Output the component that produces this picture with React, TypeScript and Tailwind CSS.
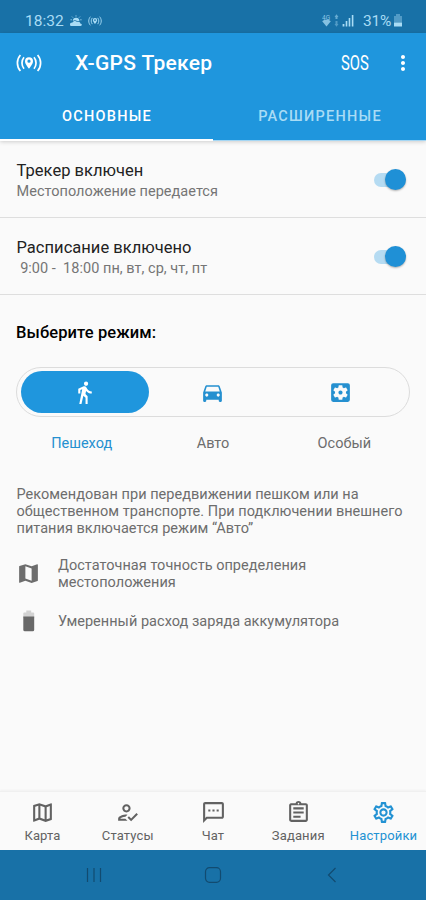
import type { ReactNode } from "react";
import {
  MdDirectionsCar,
  MdDirectionsWalk,
  MdMap,
  MdMoreVert,
  MdOutlineAssignment,
  MdOutlineHowToReg,
  MdOutlineMap,
  MdOutlineSettings,
  MdOutlineSms,
  MdSettingsApplications,
} from "react-icons/md";

function TrackerLogo({ className }: { className: string }) {
  return (
    <svg viewBox="0 0 26 18" className={className} fill="none" stroke="currentColor" strokeWidth="1.7">
      <path d="M4.4 1C.4 5.5.4 12.5 4.4 17M8 3.2c-2.7 3.3-2.7 8.3 0 11.6M21.6 1c4 4.5 4 11.5 0 16M18 3.2c2.7 3.3 2.7 8.3 0 11.6" />
      <path
        d="M13 3.2a4 4 0 0 0-4 4c0 2.9 4 7.4 4 7.4s4-4.5 4-7.4a4 4 0 0 0-4-4Zm0 5.6a1.6 1.6 0 1 1 0-3.2 1.6 1.6 0 0 1 0 3.2Z"
        fill="currentColor"
        stroke="none"
      />
    </svg>
  );
}

function StatusBar() {
  return (
    <div className="flex h-[33px] shrink-0 items-start bg-[#1871a7] pl-[25px] pt-[9px] text-[#a9dcf5]">
      <span className="w-[45px] text-[15.5px] leading-6">18:32</span>
      <svg viewBox="0 0 12 12" className="mt-[6px] h-3 w-3" fill="currentColor">
        <path d="M0 9.4C0 8 1.3 7.3 2.6 7.5 3.2 5.8 6 5.4 7 7.1c1.5-.8 3.3 0 3.3 1.3 2 .1 2.1 2.6.2 2.6H1.6C.6 11 0 10.3 0 9.4Z" />
        <path d="M2.8 5.9a3.3 3.3 0 0 1 6.6.3c-1-.3-1.6-.1-2.1.1-1.2-1.3-3-1.5-4.5-.4Z" />
        <path d="M6 .3v1.3M2 1.6l1 1M10 1.6l-1 1M.5 4.8h1.4M10.2 4.8h1.4" stroke="currentColor" strokeWidth=".8" />
      </svg>
      <TrackerLogo className="ml-[6px] mt-[7px] h-[10px] w-[14px]" />
      <div className="ml-[220px] mt-[5px] flex">
        <svg viewBox="0 0 34 15" className="h-[15px] w-[34px]" fill="currentColor">
          <text x="0" y="5.6" fontSize="6.5" opacity=".8">4G</text>
          <path d="M.2 7.2c2.5-1.9 6.1-1.9 8.6 0L4.5 12.5Z" opacity=".75" />
          <path d="m14.5.2 2 2.7h-1v2h-2v-2h-1Z" opacity=".55" />
          <path d="m14.5 12.7 2-2.7h-1V7h-2v3h-1Z" opacity=".4" />
          <rect x="20.6" y="10" width="1.8" height="2.5" />
          <rect x="23.7" y="7" width="1.6" height="5.5" />
          <rect x="26.7" y="4" width="1.6" height="8.5" />
          <rect x="29.8" y="1" width="1.6" height="11.5" />
        </svg>
      </div>
      <span className="ml-[7px] w-[28px] text-[15.5px] leading-6 tracking-[-0.25px]">31%</span>
      <svg viewBox="0 0 10 14" className="ml-[2px] mt-[5px] h-[14px] w-[10px]" fill="currentColor">
        <path d="M3 0h4v2h2v6.5H1V2h2Z" opacity=".4" />
        <path d="M1 8.5h8v4H1Z" />
      </svg>
    </div>
  );
}

function Header() {
  return (
    <header className="relative z-10 shrink-0 bg-[#1f96dd] text-white shadow-[0_1px_4px_rgba(0,0,0,0.18)]">
      <div className="flex h-[60px] items-center pl-4">
        <TrackerLogo className="h-[18px] w-[26px]" />
        <h1 className="ml-[33px] w-[266px] text-[21px] font-medium leading-7 tracking-[0.23px]">X-GPS Трекер</h1>
        <span className="w-[28px] origin-left scale-x-[0.74] text-[20px] leading-7">SOS</span>
        <MdMoreVert className="ml-[22px] h-6 w-6" />
      </div>
      <div className="grid h-[48px] grid-cols-2 border-b border-[#a5d6f3] text-center text-[14.5px] font-medium leading-[48px] tracking-[1.25px]">
        <div className="h-[48px] border-b-2 border-white pl-px">ОСНОВНЫЕ</div>
        <div className="pl-px text-[#a9dcf5]">РАСШИРЕННЫЕ</div>
      </div>
    </header>
  );
}

function Toggle() {
  return (
    <div className="mt-px flex h-[14px] w-[32px] items-center justify-end rounded-full bg-[#b5dbf2]">
      <div className="h-[21px] w-[21px] shrink-0 rounded-full bg-[#1f90d6] shadow-[0_1px_2px_rgba(0,0,0,0.3)]" />
    </div>
  );
}

function SettingRow({ title, children }: { title: string; children: ReactNode }) {
  return (
    <div className="flex h-[77px] shrink-0 items-center justify-between border-b border-[#dedede] pl-[16.5px] pr-[20px]">
      <div className="pt-1">
        <div className="text-[16.5px] leading-[21px] tracking-[0.03px] text-[#222]">{title}</div>
        <div className="whitespace-pre text-[14.5px] leading-[21px] tracking-[0.03px] text-[#757575]">{children}</div>
      </div>
      <Toggle />
    </div>
  );
}

function NavItem({ icon, label, active = false }: { icon: ReactNode; label: string; active?: boolean }) {
  return (
    <div className={`flex w-[85px] flex-col items-center pt-[8px] ${active ? "text-[#2392d3]" : "text-[#626262]"}`}>
      {icon}
      <span className="mt-[2px] text-[13px] leading-[18px] tracking-[0.15px]">{label}</span>
    </div>
  );
}

export default function App() {
  return (
    <div className="flex h-[900px] w-[426px] flex-col overflow-hidden bg-[#fafafa] font-['Roboto','Noto_Sans',sans-serif]">
      <StatusBar />
      <Header />
      <SettingRow title="Трекер включен">Местоположение передается</SettingRow>
      <SettingRow title="Расписание включено">{" 9:00 -  18:00 пн, вт, ср, чт, пт"}</SettingRow>

      <main className="flex-1 px-4 pt-[26px] text-[#6d6d6d]">
        <h2 className="text-[16.5px] font-medium leading-6 tracking-[0.1px] text-black">Выберите режим:</h2>
        <div className="mt-[22px] flex h-[50px] items-center rounded-full border border-[#dcdcdc] px-[4px] text-[#2590d0]">
          <div className="flex h-[42px] w-[128px] items-center justify-center rounded-full bg-[#1f96dd] text-white">
            <MdDirectionsWalk className="mr-px h-[25px] w-[25px]" />
          </div>
          <div className="flex w-[128px] justify-center">
            <MdDirectionsCar className="mr-px h-[25px] w-[25px]" />
          </div>
          <div className="flex w-[128px] justify-center">
            <MdSettingsApplications className="mr-px h-[25px] w-[25px]" />
          </div>
        </div>
        <div className="mt-4 grid grid-cols-3 pt-px text-center text-[14.5px] leading-5">
          <span className="text-[#2590d0]">Пешеход</span>
          <span>Авто</span>
          <span>Особый</span>
        </div>
        <p className="mt-[32px] whitespace-nowrap pl-[0.5px] text-[14.5px] leading-[17px] tracking-[0.03px]">
          Рекомендован при передвижении пешком или на
          <br />
          общественном транспорте. При подключении внешнего
          <br />
          питания включается режим “Авто”
        </p>
        <div className="mt-5 flex items-center">
          <MdMap className="mt-[-2px] h-[25px] w-[25px]" />
          <p className="ml-[17px] text-[14.5px] leading-[17px] tracking-[0.03px]">
            Достаточная точность определения
            <br />
            местоположения
          </p>
        </div>
        <div className="mt-[18px] flex items-center">
          <svg viewBox="0 0 25 25" className="h-[25px] w-[25px]">
            <path d="M10.3 1.5h4.9v2h2a1 1 0 0 1 1 1V9H7.3V4.5a1 1 0 0 1 1-1h2Z" fill="#d2d2d2" />
            <path d="M7.3 7.5h10.9v13.3a1.5 1.5 0 0 1-1.5 1.5H8.8a1.5 1.5 0 0 1-1.5-1.5Z" fill="#686868" />
          </svg>
          <p className="ml-[17px] text-[14.5px] leading-[17px] tracking-[0.03px]">Умеренный расход заряда аккумулятора</p>
        </div>
      </main>

      <nav className="flex h-[59px] shrink-0 justify-between border-t border-[#f0f0f0] bg-[#fafafa] shadow-[0_-1px_2px_rgba(0,0,0,0.04)]">
        <NavItem icon={<MdOutlineMap className="h-[25px] w-[25px]" />} label="Карта" />
        <NavItem icon={<MdOutlineHowToReg className="h-[25px] w-[25px]" />} label="Статусы" />
        <NavItem icon={<MdOutlineSms className="h-[25px] w-[25px]" />} label="Чат" />
        <NavItem icon={<MdOutlineAssignment className="h-[25px] w-[25px]" />} label="Задания" />
        <NavItem icon={<MdOutlineSettings className="h-[25px] w-[25px]" />} label="Настройки" active />
      </nav>
      <div className="flex h-[50px] shrink-0 items-center justify-around bg-[#1871a7] px-[34px] text-[#124b70]">
        <svg viewBox="0 0 18 18" className="h-[18px] w-[18px]" fill="none" stroke="currentColor" strokeWidth="1.2">
          <path d="M2.5 2v14M9 2v14M15.5 2v14" />
        </svg>
        <svg viewBox="0 0 18 18" className="h-[18px] w-[18px]" fill="none" stroke="currentColor" strokeWidth="1.2">
          <rect x="1.5" y="1.7" width="15" height="14.6" rx="4" />
        </svg>
        <svg viewBox="0 0 18 18" className="h-[18px] w-[18px]" fill="none" stroke="currentColor" strokeWidth="1.2">
          <path d="m12.5 2-7 7 7 7" />
        </svg>
      </div>
    </div>
  );
}
